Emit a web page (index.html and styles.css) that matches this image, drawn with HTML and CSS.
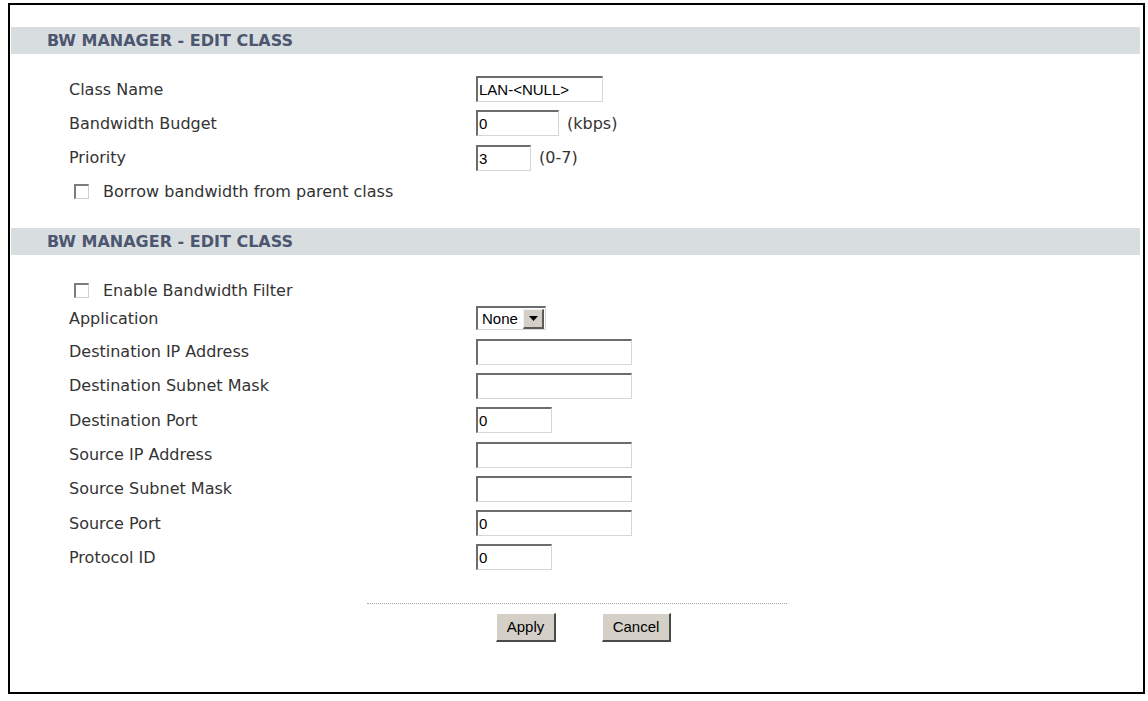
FILE: index.html
```html
<!DOCTYPE html>
<html>
<head>
<meta charset="utf-8">
<title>BW Manager - Edit Class</title>
<link rel="stylesheet" href="styles.css">
</head>
<body>
<div class="frame">
  <div class="section-head">BW MANAGER - EDIT CLASS</div>
  <div class="fields first">
    <div class="row"><span class="lbl">Class Name</span><input class="txt w-name" type="text" value="LAN-&lt;NULL&gt;"></div>
    <div class="row"><span class="lbl">Bandwidth Budget</span><input class="txt w-budget" type="text" value="0"><span class="unit">(kbps)</span></div>
    <div class="row"><span class="lbl">Priority</span><input class="txt w-prio" type="text" value="3"><span class="unit">(0-7)</span></div>
    <div class="row check"><span class="cb"></span><span class="cb-text">Borrow bandwidth from parent class</span></div>
  </div>
  <div class="section-head">BW MANAGER - EDIT CLASS</div>
  <div class="fields second">
    <div class="row check tight"><span class="cb"></span><span class="cb-text">Enable Bandwidth Filter</span></div>
    <div class="row app"><span class="lbl">Application</span>
      <div class="select"><span class="sel-val">None</span><span class="sel-btn"><svg width="9" height="5" viewBox="0 0 9 5"><path d="M0 0H9L4.5 5Z" fill="#000"/></svg></span></div>
    </div>
    <div class="row"><span class="lbl">Destination IP Address</span><input class="txt w-wide" type="text" value=""></div>
    <div class="row"><span class="lbl">Destination Subnet Mask</span><input class="txt w-wide" type="text" value=""></div>
    <div class="row"><span class="lbl">Destination Port</span><input class="txt w-port" type="text" value="0"></div>
    <div class="row"><span class="lbl">Source IP Address</span><input class="txt w-wide" type="text" value=""></div>
    <div class="row"><span class="lbl">Source Subnet Mask</span><input class="txt w-wide" type="text" value=""></div>
    <div class="row"><span class="lbl">Source Port</span><input class="txt w-wide" type="text" value="0"></div>
    <div class="row"><span class="lbl">Protocol ID</span><input class="txt w-port" type="text" value="0"></div>
  </div>
  <div class="actions">
    <div class="dotline"></div>
    <div class="buttons">
      <button class="btn w-apply" type="button">Apply</button>
      <button class="btn w-cancel" type="button">Cancel</button>
    </div>
  </div>
</div>
</body>
</html>
```
FILE: styles.css
```css
html, body {
  margin: 0;
  padding: 0;
  background: #ffffff;
}

body {
  font-family: "DejaVu Sans", Verdana, sans-serif;
  font-size: 16px;
  color: #333333;
}

.frame {
  box-sizing: border-box;
  margin: 3px 0 0 8px;
  width: 1137px;
  height: 691px;
  border: 2px solid #000000;
  padding-top: 22px;
}

.section-head {
  box-sizing: border-box;
  height: 27px;
  margin: 0 3px 0 1px;
  padding-left: 36px;
  background: #d8dee0;
  color: #4d5670;
  font-weight: bold;
  font-size: 16px;
  line-height: 28px;
  white-space: nowrap;
}

.fields {
  display: flex;
  flex-direction: column;
  padding: 22px 0 0 59px;
}

.fields.first {
  padding-bottom: 23.5px;
}

.row {
  display: flex;
  align-items: center;
  height: 26px;
  margin-bottom: 8.3px;
}

.row:last-child {
  margin-bottom: 0;
}

.row.tight {
  margin-bottom: 2px;
}

.row.app {
  margin-bottom: 7.3px;
}

.lbl {
  width: 407px;
  flex: none;
  white-space: nowrap;
}

.check {
  padding-left: 5px;
}

.cb {
  box-sizing: border-box;
  width: 15px;
  height: 15px;
  flex: none;
  background: #ffffff;
  border-top: 2px solid #7c7c7c;
  border-left: 2px solid #7c7c7c;
  border-right: 1px solid #d0d0d0;
  border-bottom: 1px solid #d0d0d0;
  margin-right: 14px;
}

.cb-text {
  white-space: nowrap;
}

.txt {
  box-sizing: border-box;
  height: 26px;
  margin: 0;
  padding: 0 0 0 1px;
  border-top: 2px solid #6c6c6c;
  border-left: 2px solid #6c6c6c;
  border-right: 1px solid #d6d6d6;
  border-bottom: 1px solid #d6d6d6;
  background: #ffffff;
  font-family: "Liberation Sans", Arial, sans-serif;
  font-size: 15px;
  color: #000000;
  outline: none;
}

.w-name { width: 127px; }
.w-budget { width: 83px; }
.w-prio { width: 55px; }
.w-wide { width: 156px; }
.w-port { width: 76px; }

.unit {
  margin-left: 8px;
  white-space: nowrap;
}

.select {
  box-sizing: border-box;
  width: 70px;
  height: 24px;
  display: flex;
  align-items: center;
  justify-content: space-between;
  border-top: 2px solid #6c6c6c;
  border-left: 2px solid #6c6c6c;
  border-right: 1px solid #d6d6d6;
  border-bottom: 1px solid #d6d6d6;
  background: #ffffff;
  padding-right: 1px;
  font-family: "Liberation Sans", Arial, sans-serif;
  font-size: 15px;
  color: #000000;
}

.sel-val {
  padding-left: 4px;
}

.sel-btn {
  box-sizing: border-box;
  width: 21px;
  height: 20px;
  display: flex;
  align-items: center;
  justify-content: center;
  background: #d4d0c8;
  border-top: 1px solid #f2f2f2;
  border-left: 1px solid #f2f2f2;
  border-right: 2px solid #5a5a5a;
  border-bottom: 2px solid #5a5a5a;
}

.actions {
  padding-top: 32.5px;
}

.dotline {
  width: 420px;
  margin: 0 auto;
  border-top: 1px dotted #a8a8a8;
}

.buttons {
  display: flex;
  justify-content: center;
  gap: 46px;
  padding: 9px 0 0 14px;
}

.btn {
  box-sizing: border-box;
  height: 29px;
  margin: 0;
  padding: 0;
  background: #d4d0c8;
  border-top: 1px solid #ffffff;
  border-left: 1px solid #ffffff;
  border-right: 2px solid #4a4a4a;
  border-bottom: 2px solid #4a4a4a;
  font-family: "Liberation Sans", Arial, sans-serif;
  font-size: 15px;
  color: #000000;
}

.w-apply { width: 60px; }
.w-cancel { width: 69px; }
```
